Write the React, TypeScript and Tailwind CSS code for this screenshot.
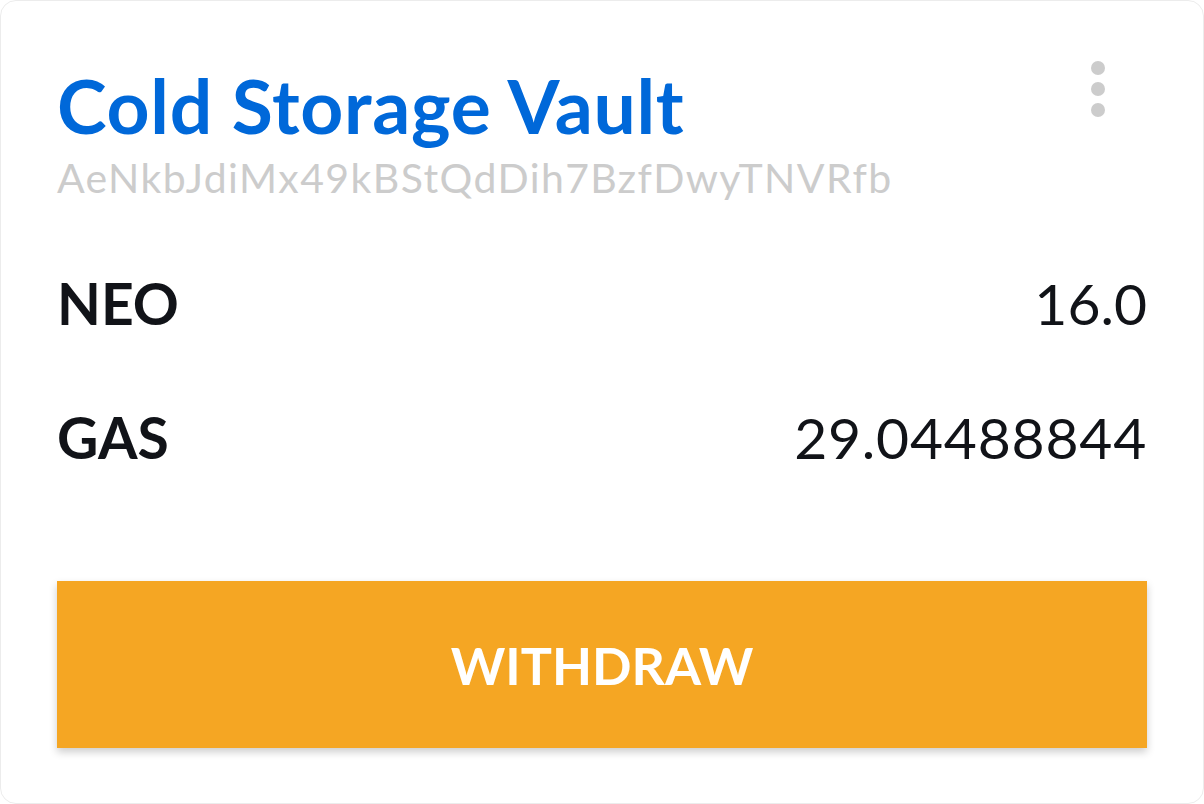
export default function App() {
  return (
    <div className="w-[1204px] h-[804px] bg-white">
      <div
        className="h-full rounded-[16px] border border-[#ececec] bg-white px-[56px] pt-[60px]"
        style={{ fontFamily: "Lato, 'Open Sans', sans-serif" }}
      >
        <div className="flex items-start justify-between">
          <div>
            <h1 className="text-[75px] leading-[88px] font-bold tracking-[0.7px] text-[#0068d9]">
              Cold Storage Vault
            </h1>
            <p className="mt-[5px] text-[41px] leading-[48px] tracking-[1.4px] text-[#cccccc]">
              AeNkbJdiMx49kBStQdDih7BzfDwyTNVRfb
            </p>
          </div>
          <button className="mr-[42px] flex flex-col items-center gap-[7px]">
            <span className="w-[14px] h-[14px] rounded-full bg-[#cccccc]" />
            <span className="w-[14px] h-[14px] rounded-full bg-[#cccccc]" />
            <span className="w-[14px] h-[14px] rounded-full bg-[#cccccc]" />
          </button>
        </div>

        <div className="mt-[67px] flex flex-col gap-[66px] text-[#111318]">
          <div className="flex items-center justify-between text-[57px] leading-[68px]">
            <span className="font-bold">NEO</span>
            <span>16.0</span>
          </div>
          <div className="flex items-center justify-between text-[57px] leading-[68px]">
            <span className="font-bold">GAS</span>
            <span className="tracking-[0.8px]">29.04488844</span>
          </div>
        </div>

        <button className="mt-[110px] w-full h-[167px] bg-[#f5a623] text-white text-[52px] font-bold shadow-[0_4px_8px_rgba(0,0,0,0.2)]">
          WITHDRAW
        </button>
      </div>
    </div>
  );
}
